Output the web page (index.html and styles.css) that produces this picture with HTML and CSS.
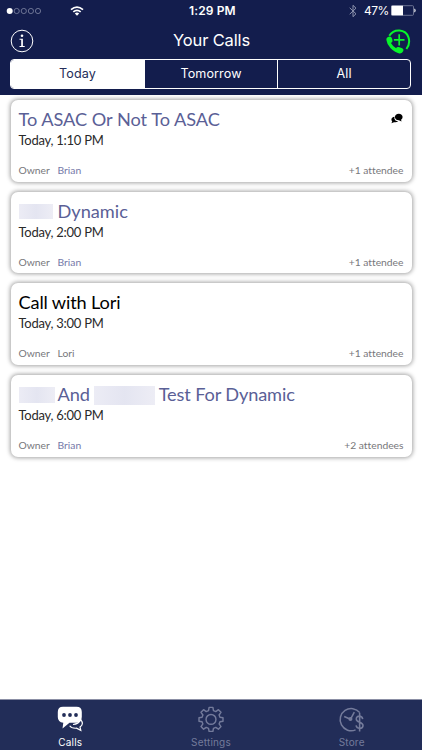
FILE: index.html
```
<!DOCTYPE html>
<html lang="en">
<head>
<meta charset="utf-8">
<title>Your Calls</title>
<link rel="stylesheet" href="styles.css">
</head>
<body>
<header>
  <div class="status">
    <svg class="signal" width="36" height="8" viewBox="0 0 36 8"><circle cx="3.7" cy="4" r="3" fill="#fff"/><g fill="none" stroke="#8188a5" stroke-width=".8"><circle cx="10.7" cy="4" r="2.6"/><circle cx="17.8" cy="4" r="2.6"/><circle cx="24.9" cy="4" r="2.6"/><circle cx="32" cy="4" r="2.6"/></g></svg>
    <svg class="wifi" width="14" height="10" viewBox="0 0 14 10" fill="none" stroke="#fff" stroke-width="1.8"><path d="M1 3.6Q7-1.4 13 3.6M3.3 5.9Q7 2.8 10.7 5.9"/><path d="M4.8 7.4Q7 5.6 9.2 7.4L7 9.7Z" fill="#fff" stroke="none"/></svg>
    <span class="clock">1:29 PM</span>
    <svg class="bluetooth" width="8" height="14" viewBox="0 0 8 14" fill="none" stroke="#8d93ad" stroke-width="1"><path d="M.7 3.8L7 9.8 4 12.7V1.3L7 4.2 .7 10.2"/></svg>
    <span class="percent">47%</span>
    <svg class="battery" width="26" height="11" viewBox="0 0 26 11"><rect x=".5" y=".7" width="22" height="9.6" rx="1" fill="none" stroke="#8188a5" stroke-width=".8"/><path d="M.5 .7H12V10.3H.5Z" fill="#fff"/><path d="M23.7 3.8Q25 5.5 23.7 7.2Z" fill="#fff" stroke="#fff" stroke-width=".5"/></svg>
  </div>
  <div class="nav">
    <svg width="24" height="24" viewBox="0 0 24 24"><circle cx="12" cy="12" r="10.8" fill="none" stroke="#fff" stroke-width="1"/><circle cx="12" cy="6.7" r="1.3" fill="#fff"/><path d="M9.5 9.8H12.9V17H14.7V18H9.5V17H11.2V10.8H9.5Z" fill="#fff"/></svg>
    <h1>Your Calls</h1>
    <svg class="add" width="26" height="26" viewBox="0 0 26 26" fill="none" stroke="#08f52a"><path d="M4.3 6.8C9-.7 20.5 0 23.4 8.2Q25.6 14.5 21.4 20" stroke-width="2"/><path d="M14.2 5.2V16.4M8.9 10.8H19.5" stroke-width="1.7"/><path d="M1.4 11Q1.1 8.5 3.7 7.8 6.2 7 7 9.5L7.5 11.5Q7.8 13.4 5.9 14.1 7.7 17.2 11.1 19.3 11.8 17.6 13.7 18L17.3 19.2Q19.1 20.1 18.3 22 17.2 24.8 14.4 24.4 10.2 23.7 5.6 19.2 1.8 15.2 1.4 11Z" fill="#08f52a" stroke="none"/></svg>
  </div>
  <div class="segments"><span class="selected">Today</span><span>Tomorrow</span><span>All</span></div>
</header>
<main>
  <article class="card">
    <div class="top"><h2 class="t-asac">To ASAC Or Not To ASAC</h2>
      <svg class="chat" width="12" height="11" viewBox="0 0 12 11"><path d="M3.5 3.7C1.6 3.9.4 5 .4 6.5Q.4 7.6 1.2 8.4L.4 10.2 3 9.2Q5.6 9.7 7.2 8.2 4.1 8.2 3.4 5.7Z"/><path d="M7.8.7C5.5.7 3.9 2 3.9 4S5.6 7.3 7.9 7.3L10.5 8.5 10.1 6.7Q11.6 5.8 11.6 4C11.6 2 10 .7 7.8.7Z"/></svg>
    </div>
    <div class="time">Today, 1:10 PM</div>
    <div class="meta"><span class="owner">Owner</span><span class="person">Brian</span><span class="count">+1 attendee</span></div>
  </article>
  <article class="card">
    <div class="top"><h2><i class="mask m1"></i>Dynamic</h2></div>
    <div class="time">Today, 2:00 PM</div>
    <div class="meta"><span class="owner">Owner</span><span class="person">Brian</span><span class="count">+1 attendee</span></div>
  </article>
  <article class="card">
    <div class="top"><h2 class="t-lori">Call with Lori</h2></div>
    <div class="time">Today, 3:00 PM</div>
    <div class="meta"><span class="owner">Owner</span><span class="person plain">Lori</span><span class="count">+1 attendee</span></div>
  </article>
  <article class="card">
    <div class="top"><h2 class="t-test"><i class="mask m2"></i><span>And</span><i class="mask m3"></i><span>Test For Dynamic</span></h2></div>
    <div class="time">Today, 6:00 PM</div>
    <div class="meta"><span class="owner">Owner</span><span class="person">Brian</span><span class="count">+2 attendees</span></div>
  </article>
</main>
<footer>
  <div class="tab active">
    <svg width="28" height="28" viewBox="0 0 28 28"><path d="M17 19.5Q22.5 19 24.8 14.6 28.3 19.2 24 22L24.8 25.3 20.5 23.2Q15.5 23.6 13.7 20.8" fill="none" stroke="#fff" stroke-width="1.2"/><path d="M7 1.8H20.5Q25.8 1.8 25.8 7V11.7Q25.8 17.3 20.5 17.7H13.5L6.5 23.5 7.3 17.7Q1.8 17.3 1.8 12V7Q1.8 1.8 7 1.8Z" fill="#fff"/><g fill="#222d58"><circle cx="8" cy="10" r="1.9"/><circle cx="14" cy="10" r="1.9"/><circle cx="20" cy="10" r="1.9"/></g></svg>
    <span>Calls</span>
  </div>
  <div class="tab">
    <svg width="28" height="28" viewBox="-.7 -.7 29.4 29.4" fill="none" stroke="currentColor" stroke-width="1.5" stroke-linejoin="round"><path d="M12 1.8H16L16.6 5.2 19 6.2 21.8 4.2 24.5 7 22.5 9.8 23.4 12.1 26.6 12.7V16.3L23.4 16.9 22.5 19.2 24.5 22 21.8 24.7 19 22.8 16.6 23.8 16 27H12L11.4 23.8 9 22.8 6.2 24.7 3.5 22 5.5 19.2 4.6 16.9 1.4 16.3V12.7L4.6 12.1 5.5 9.8 3.5 7 6.2 4.2 9 6.2 11.4 5.2Z"/><circle cx="14" cy="14.4" r="5.2"/></svg>
    <span>Settings</span>
  </div>
  <div class="tab">
    <svg width="28" height="28" viewBox="-.4 -.4 29 29" fill="none" stroke="currentColor" stroke-width="1.6"><path d="M22.2 7.5A11.5 11.5 0 1 0 17.8 25.4M6 11.5L12.5 14.4 16.5 7"/><circle cx="12.5" cy="14.2" r="1.3"/><path d="M25.2 14.2C24.5 10.1 18.5 10.1 18.5 14 18.5 18 25.5 16.9 25.5 20.9 25.5 24.8 19 24.9 18.3 20.8M22 7.8V27"/></svg>
    <span>Store</span>
  </div>
</footer>
</body>
</html>
```
FILE: styles.css
```
* { box-sizing: border-box; }
body { margin: 0; width: 422px; height: 750px; background: #fff; display: flex; flex-direction: column; overflow: hidden; font-family: Lato, sans-serif; font-variant-ligatures: none; }
header { height: 95px; background: #131d4d; color: #fff; font-family: Inter, sans-serif; flex: none; }
.status { height: 21px; display: flex; align-items: center; padding-left: 6px; font-size: 12px; line-height: 21px; }
.signal { margin-right: 28px; }
.clock { margin-left: 105px; width: 50px; font-weight: 600; white-space: nowrap; letter-spacing: .13px; }
.bluetooth { margin-left: 110px; }
.percent { margin-left: 7px; width: 24px; font-size: 12px; letter-spacing: -.5px; }
.battery { margin-left: 3px; }
.nav { height: 39px; padding: 0 11px 0 10px; display: flex; justify-content: space-between; align-items: center; }
.add { margin-top: 2px; }
h1 { margin: 0 0 0 4px; font: 400 16.5px/39px Inter, sans-serif; letter-spacing: -.15px; }
.segments { margin: -1px 11px 0 10px; height: 30px; border: 1px solid #fff; border-radius: 4px; display: grid; grid-template-columns: 133px 133px 1fr; overflow: hidden; font-size: 12.6px; line-height: 28px; text-align: center; letter-spacing: .1px; }
.segments span + span { border-left: 1px solid #fff; }
.segments .selected { background: #fff; color: #252e59; }
main { flex: 1; padding: 5px 10.5px 0; display: flex; flex-direction: column; gap: 10.2px; }
.card { height: 81.5px; border-radius: 7px; background: #fff; box-shadow: 0 0 4px 1px rgba(0,0,0,.36); padding: 8px 8px 0; }
.top { height: 23px; display: flex; justify-content: space-between; }
h2 { margin: 0; font-size: 18.2px; font-weight: 400; line-height: 23px; color: #5a6096; white-space: nowrap; display: flex; }
.chat { margin: 5px 1px 0 0; }
.t-asac { letter-spacing: -.04px; }
.t-lori { color: #000; letter-spacing: -.15px; }
.t-test { letter-spacing: -.14px; }
.mask { background: linear-gradient(90deg, #ececf5, #e4e5f1 50%, #ededf5); }
.m1 { width: 34px; height: 15px; margin: 4px 5px 0 0; }
.m2 { width: 36px; height: 16px; margin: 4px 3px 0 0; }
.m3 { width: 61px; height: 19px; margin: 3px 4px 0 4px; }
.time { height: 17px; font-size: 13px; line-height: 18px; color: #2a2a2a; letter-spacing: -.25px; }
.meta { margin-top: 15px; height: 14px; display: flex; font-size: 10.3px; line-height: 14px; color: #77777b; }
.owner { width: 39px; }
.person { color: #7479a8; }
.person.plain { color: #77777b; }
.count { margin-left: auto; }
footer { height: 51px; flex: none; background: #222d58; border-top: 1px solid #8b8fa5; display: grid; grid-template-columns: repeat(3, 1fr); }
.tab { display: flex; flex-direction: column; align-items: center; padding-top: 5px; color: #747b9b; font: 10px/12px Inter, sans-serif; letter-spacing: .2px; }
.tab svg { display: block; margin-bottom: 3px; }
.active { color: #fff; }
```
